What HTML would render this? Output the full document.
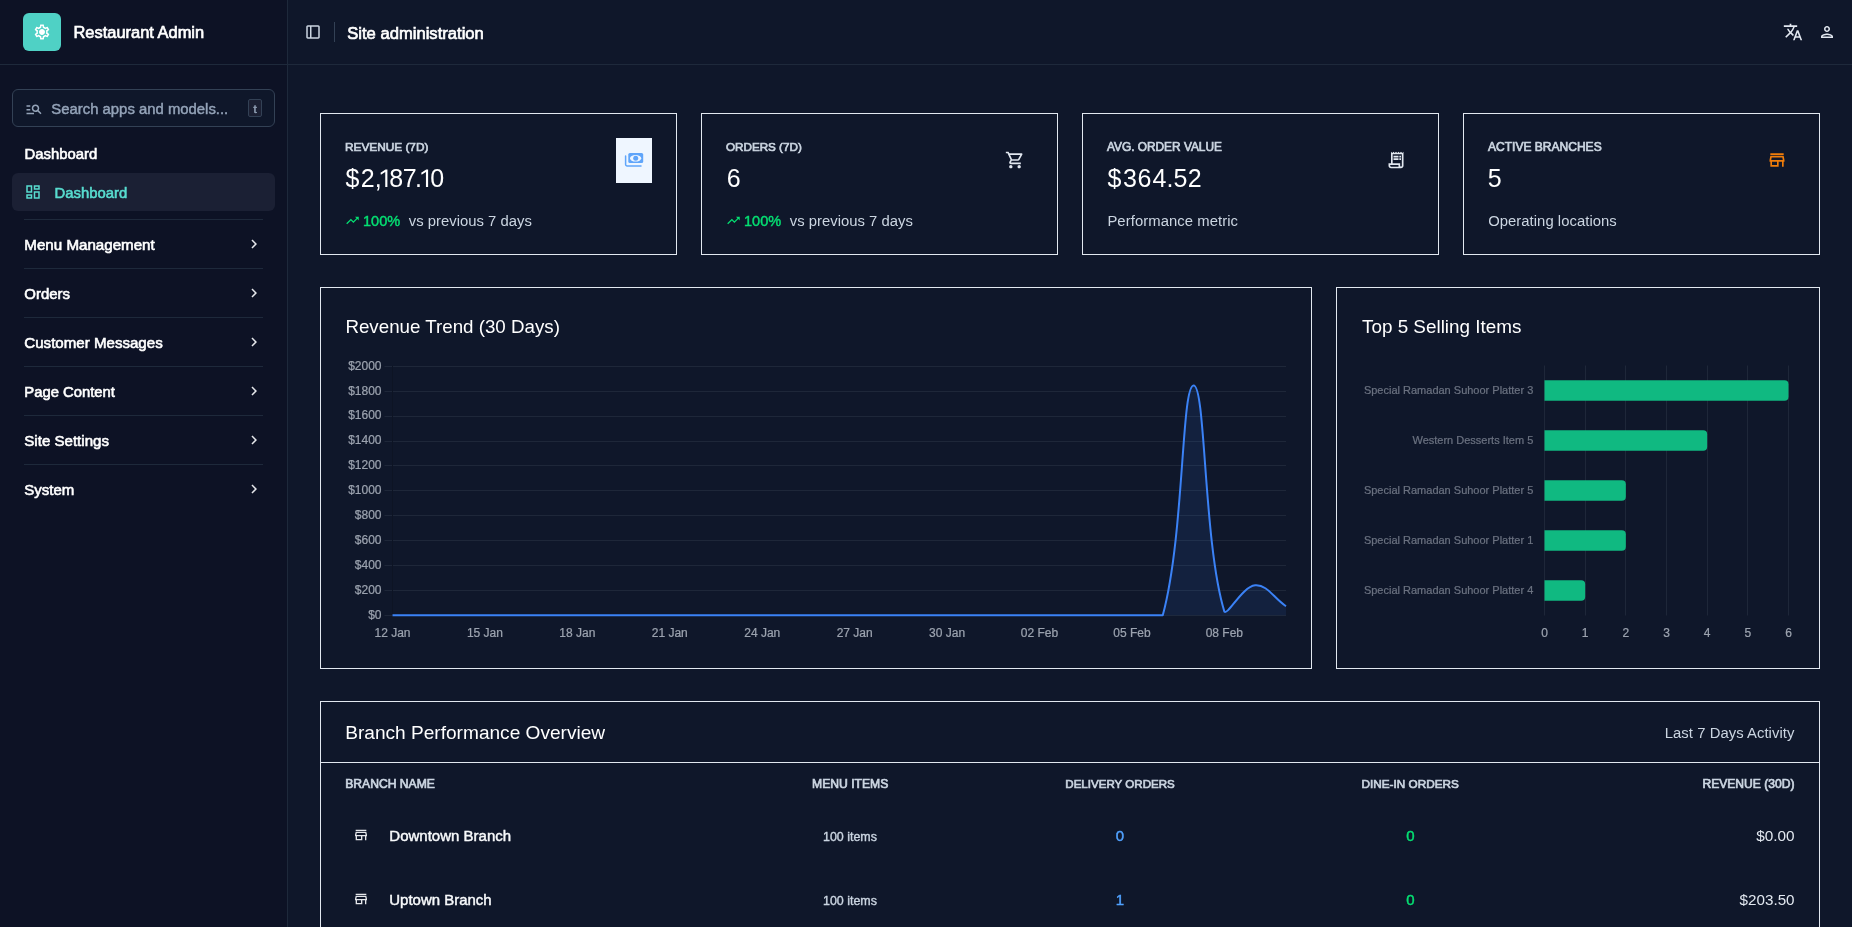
<!DOCTYPE html>
<html><head><meta charset="utf-8"><title>Site administration</title>
<style>
html,body{margin:0;padding:0;background:#0f172a;}
body{width:1852px;height:927px;position:relative;overflow:hidden;font-family:"Liberation Sans", sans-serif;}
svg{display:block}
svg text{font-family:"Liberation Sans", sans-serif;white-space:pre}
svg text.c{stroke-width:.22px}
</style></head><body>
<div style="position:absolute;left:0px;top:0px;width:287px;height:927px;background:#0d1225"></div>
<div style="position:absolute;left:287px;top:0px;width:1px;height:927px;background:#1e293b"></div>
<div style="position:absolute;left:0px;top:64px;width:1852px;height:1px;background:#1e293b"></div>
<div style="position:absolute;left:23px;top:13px;width:38px;height:38px;background:#4fd1c5;border-radius:6px"></div>
<svg style="position:absolute;left:33.00px;top:23.00px" width="18" height="18" viewBox="0 0 24 24"><path fill="#ffffff" d="M19.43 12.98c.04-.32.07-.64.07-.98 0-.34-.03-.66-.07-.98l2.11-1.65c.19-.15.24-.42.12-.64l-2-3.46c-.09-.16-.26-.25-.44-.25-.06 0-.12.01-.17.03l-2.49 1c-.52-.4-1.08-.73-1.69-.98l-.38-2.65C14.46 2.18 14.25 2 14 2h-4c-.25 0-.46.18-.49.42l-.38 2.65c-.61.25-1.17.59-1.69.98l-2.49-1c-.06-.02-.12-.03-.18-.03-.17 0-.34.09-.43.25l-2 3.46c-.13.22-.07.49.12.64l2.11 1.65c-.04.32-.07.65-.07.98 0 .33.03.66.07.98l-2.11 1.65c-.19.15-.24.42-.12.64l2 3.46c.09.16.26.25.44.25.06 0 .12-.01.17-.03l2.49-1c.52.4 1.08.73 1.69.98l.38 2.65c.03.24.24.42.49.42h4c.25 0 .46-.18.49-.42l.38-2.65c.61-.25 1.17-.59 1.69-.98l2.49 1c.06.02.12.03.18.03.17 0 .34-.09.43-.25l2-3.46c.12-.22.07-.49-.12-.64l-2.11-1.65zm-1.98-1.71c.04.31.05.52.05.73 0 .21-.02.43-.05.73l-.14 1.13.89.7 1.08.84-.7 1.21-1.27-.51-1.04-.42-.9.68c-.43.32-.84.56-1.25.73l-1.06.43-.16 1.13-.2 1.35h-1.4l-.19-1.35-.16-1.13-1.06-.43c-.43-.18-.83-.41-1.23-.71l-.91-.7-1.06.43-1.27.51-.7-1.21 1.08-.84.89-.7-.14-1.13c-.03-.31-.05-.54-.05-.74s.02-.43.05-.73l.14-1.13-.89-.7-1.08-.84.7-1.21 1.27.51 1.04.42.9-.68c.43-.32.84-.56 1.25-.73l1.06-.43.16-1.13.2-1.35h1.39l.19 1.35.16 1.13 1.06.43c.43.18.83.41 1.23.71l.91.7 1.06-.43 1.27-.51.7 1.21-1.07.85-.89.7.14 1.13zM12 8c-2.21 0-4 1.79-4 4s1.79 4 4 4 4-1.79 4-4-1.79-4-4-4z"/></svg>
<svg style="position:absolute;left:304.00px;top:23.00px" width="18" height="18" viewBox="0 0 24 24"><path fill="#cbd5e1" d="M5 21q-.825 0-1.412-.587T3 19V5q0-.825.588-1.412T5 3h14q.825 0 1.413.588T21 5v14q0 .825-.587 1.413T19 21zm3-2V5H5v14zm2 0h9V5h-9z"/></svg>
<div style="position:absolute;left:334px;top:22px;width:1px;height:20px;background:#334155"></div>
<svg style="position:absolute;left:1783.00px;top:22.00px" width="20" height="20" viewBox="0 0 24 24"><path fill="#e2e8f0" d="M12.87 15.07l-2.54-2.51.03-.03c1.74-1.94 2.98-4.17 3.71-6.53H17V4h-7V2H8v2H1v1.99h11.17C11.5 7.92 10.44 9.75 9 11.35 8.07 10.32 7.3 9.19 6.69 8h-2c.73 1.63 1.73 3.17 2.98 4.56l-5.09 5.02L4 19l5-5 3.11 3.11.76-2.04zM18.5 10h-2L12 22h2l1.12-3h4.75L21 22h2l-4.5-12zm-2.62 7l1.62-4.33L19.12 17h-3.24z"/></svg>
<svg style="position:absolute;left:1818.00px;top:23.00px" width="18" height="18" viewBox="0 0 24 24"><path fill="#e2e8f0" d="M12 6c1.1 0 2 .9 2 2s-.9 2-2 2-2-.9-2-2 .9-2 2-2m0 10c2.7 0 5.8 1.29 6 2H6c.23-.72 3.31-2 6-2m0-12C9.79 4 8 5.79 8 8s1.79 4 4 4 4-1.79 4-4-1.79-4-4-4zm0 10c-2.67 0-8 1.34-8 4v2h16v-2c0-2.66-5.33-4-8-4z"/></svg>
<div style="position:absolute;left:12px;top:89px;width:263px;height:38px;box-sizing:border-box;border:1px solid #334155;border-radius:6px;background:#0f172a"></div>
<svg style="position:absolute;left:24.50px;top:99.50px" width="18" height="18" viewBox="0 0 24 24"><path fill="#94a3b8" d="M7 9H2V7h5v2zm0 3H2v2h5v-2zm13.59 7l-3.83-3.83c-.8.52-1.74.83-2.76.83-2.76 0-5-2.24-5-5s2.24-5 5-5 5 2.24 5 5c0 1.02-.31 1.96-.83 2.75L22 17.6 20.59 19zM17 11c0-1.65-1.35-3-3-3s-3 1.35-3 3 1.35 3 3 3 3-1.35 3-3zM2 19h10v-2H2v2z"/></svg>
<div style="position:absolute;left:248px;top:99px;width:14px;height:18px;box-sizing:border-box;border:1px solid #334155;border-radius:2px;background:#1c2033"></div>
<div style="position:absolute;left:12px;top:173px;width:263px;height:38px;background:#1b2034;border-radius:6px"></div>
<svg style="position:absolute;left:24.00px;top:183.00px" width="18" height="18" viewBox="0 0 24 24"><path fill="#58dccf" d="M19 5v2h-4V5h4M9 5v6H5V5h4m10 8v6h-4v-6h4M9 17v2H5v-2h4M21 3h-8v6h8V3zM11 3H3v10h8V3zm10 8h-8v10h8V11zm-10 4H3v6h8v-6z"/></svg>
<div style="position:absolute;left:24px;top:219px;width:239px;height:1px;background:#1e293b"></div>
<svg style="position:absolute;left:245.00px;top:235.00px" width="18" height="18" viewBox="0 0 24 24"><path fill="#e5e7eb" d="M10 6L8.59 7.41 13.17 12l-4.58 4.59L10 18l6-6z"/></svg>
<div style="position:absolute;left:24px;top:268px;width:239px;height:1px;background:#1e293b"></div>
<svg style="position:absolute;left:245.00px;top:284.00px" width="18" height="18" viewBox="0 0 24 24"><path fill="#e5e7eb" d="M10 6L8.59 7.41 13.17 12l-4.58 4.59L10 18l6-6z"/></svg>
<div style="position:absolute;left:24px;top:317px;width:239px;height:1px;background:#1e293b"></div>
<svg style="position:absolute;left:245.00px;top:333.00px" width="18" height="18" viewBox="0 0 24 24"><path fill="#e5e7eb" d="M10 6L8.59 7.41 13.17 12l-4.58 4.59L10 18l6-6z"/></svg>
<div style="position:absolute;left:24px;top:366px;width:239px;height:1px;background:#1e293b"></div>
<svg style="position:absolute;left:245.00px;top:382.00px" width="18" height="18" viewBox="0 0 24 24"><path fill="#e5e7eb" d="M10 6L8.59 7.41 13.17 12l-4.58 4.59L10 18l6-6z"/></svg>
<div style="position:absolute;left:24px;top:415px;width:239px;height:1px;background:#1e293b"></div>
<svg style="position:absolute;left:245.00px;top:431.00px" width="18" height="18" viewBox="0 0 24 24"><path fill="#e5e7eb" d="M10 6L8.59 7.41 13.17 12l-4.58 4.59L10 18l6-6z"/></svg>
<div style="position:absolute;left:24px;top:464px;width:239px;height:1px;background:#1e293b"></div>
<svg style="position:absolute;left:245.00px;top:480.00px" width="18" height="18" viewBox="0 0 24 24"><path fill="#e5e7eb" d="M10 6L8.59 7.41 13.17 12l-4.58 4.59L10 18l6-6z"/></svg>
<div style="position:absolute;left:320px;top:113px;width:357px;height:142px;box-sizing:border-box;border:1px solid #e2e8f0;background:#0f172a"></div>
<div style="position:absolute;left:616px;top:138px;width:36px;height:45px;background:#eff6ff"></div>
<svg style="position:absolute;left:624px;top:150px" width="20" height="20" viewBox="0 0 20 20"><rect x="4.3" y="3" width="14.9" height="10.1" rx="1.6" fill="#60a5fa"/><ellipse cx="11.6" cy="8.3" rx="5.6" ry="3.3" fill="#eff6ff"/><circle cx="11.7" cy="8.3" r="2.5" fill="#60a5fa"/><path d="M1.6,6 V14.4 a1.5,1.5 0 0 0 1.5,1.5 H17" fill="none" stroke="#60a5fa" stroke-width="1.5" stroke-linecap="round"/></svg>
<div style="position:absolute;left:701px;top:113px;width:357px;height:142px;box-sizing:border-box;border:1px solid #e2e8f0;background:#0f172a"></div>
<svg style="position:absolute;left:1005.00px;top:150.00px" width="20" height="20" viewBox="0 0 24 24"><path fill="#e2e8f0" d="M15.55 13c.75 0 1.41-.41 1.75-1.03l3.58-6.49c.37-.66-.11-1.48-.87-1.48H5.21l-.94-2H1v2h2l3.6 7.59-1.35 2.44C4.52 15.37 5.48 17 7 17h12v-2H7l1.1-2h7.45zM6.16 6h12.15l-2.76 5H8.53L6.16 6zM7 18c-1.1 0-1.99.9-1.99 2S5.9 22 7 22s2-.9 2-2-.9-2-2-2zm10 0c-1.1 0-1.99.9-1.99 2s.89 2 1.99 2 2-.9 2-2-.9-2-2-2z"/></svg>
<div style="position:absolute;left:1082px;top:113px;width:357px;height:142px;box-sizing:border-box;border:1px solid #e2e8f0;background:#0f172a"></div>
<svg style="position:absolute;left:1386.00px;top:150.00px" width="20" height="20" viewBox="0 0 24 24"><path fill="#e2e8f0" d="M19.5 3.5L18 2l-1.5 1.5L15 2l-1.5 1.5L12 2l-1.5 1.5L9 2 7.5 3.5 6 2v14H3v3c0 1.66 1.34 3 3 3h12c1.66 0 3-1.34 3-3V2l-1.5 1.500zM15 20H6c-.55 0-1-.45-1-1v-1h10v2zm4-1c0 .55-.45 1-1 1s-1-.45-1-1v-3H8V5h11v14zM9 7h6v2H9zM16 7h2v2h-2zM9 10h6v2H9zM16 10h2v2h-2z"/></svg>
<div style="position:absolute;left:1463px;top:113px;width:357px;height:142px;box-sizing:border-box;border:1px solid #e2e8f0;background:#0f172a"></div>
<svg style="position:absolute;left:1767.00px;top:150.00px" width="20" height="20" viewBox="0 0 24 24"><path fill="#f07d0a" d="M18.36 9l.6 3H5.04l.6-3h12.72M20 4H4v2h16V4zm0 3H4l-1 5v2h1v6h10v-6h4v6h2v-6h1v-2l-1-5zM6 18v-4h6v4H6z"/></svg>
<svg style="position:absolute;left:344.50px;top:213.10px" width="15" height="15" viewBox="0 0 24 24"><path fill="#05df72" d="M16 6l2.29 2.29-4.88 4.88-4-4L2 16.59 3.41 18l6-6 4 4 6.3-6.29L22 12V6z"/></svg>
<svg style="position:absolute;left:725.50px;top:213.10px" width="15" height="15" viewBox="0 0 24 24"><path fill="#05df72" d="M16 6l2.29 2.29-4.88 4.88-4-4L2 16.59 3.41 18l6-6 4 4 6.3-6.29L22 12V6z"/></svg>
<div style="position:absolute;left:320px;top:287px;width:992px;height:382px;box-sizing:border-box;border:1px solid #e2e8f0;background:#0f172a"></div>
<div style="position:absolute;left:1336px;top:287px;width:484px;height:382px;box-sizing:border-box;border:1px solid #e2e8f0;background:#0f172a"></div>
<div style="position:absolute;left:320px;top:701px;width:1500px;height:300px;box-sizing:border-box;border:1px solid #e2e8f0;background:#0f172a"></div>
<div style="position:absolute;left:321px;top:762px;width:1498px;height:1px;background:#e2e8f0"></div>
<svg style="position:absolute;left:353.00px;top:827.00px" width="16" height="16" viewBox="0 0 24 24"><path fill="#e5e7eb" d="M18.36 9l.6 3H5.04l.6-3h12.72M20 4H4v2h16V4zm0 3H4l-1 5v2h1v6h10v-6h4v6h2v-6h1v-2l-1-5zM6 18v-4h6v4H6z"/></svg>
<svg style="position:absolute;left:353.00px;top:891.00px" width="16" height="16" viewBox="0 0 24 24"><path fill="#e5e7eb" d="M18.36 9l.6 3H5.04l.6-3h12.72M20 4H4v2h16V4zm0 3H4l-1 5v2h1v6h10v-6h4v6h2v-6h1v-2l-1-5zM6 18v-4h6v4H6z"/></svg>
<svg style="position:absolute;left:0;top:0;will-change:transform" width="1852" height="927" viewBox="0 0 1852 927">
<path fill="#ffffff" d="M387.40,169.38 V187 H385.25 V172.07 L380.90,174.68 L380.50,172.68 L385.50,169.38 Z"/>
<path fill="#ffffff" d="M428.10,169.38 V187 H425.95 V172.07 L421.60,174.68 L421.20,172.68 L426.20,169.38 Z"/>
<text x="345.47 360.80 374.63 389.35 402.69 414.88 430.25" y="187" font-size="25" fill="#ffffff">$2,87.0</text>
<text x="1107.62 1122.88 1137.46 1152.43 1166.53 1173.47 1187.75" y="187" font-size="25" fill="#ffffff">$364.52</text>
<line x1="384.5" y1="615.50" x2="1286.0" y2="615.50" stroke="#1e2739"/>
<text x="381.5" y="618.65" text-anchor="end" font-size="12" class="c" stroke="#9ca3af" fill="#9ca3af">$0</text>
<line x1="384.5" y1="590.50" x2="1286.0" y2="590.50" stroke="#1e2739"/>
<text x="381.5" y="593.75" text-anchor="end" font-size="12" class="c" stroke="#9ca3af" fill="#9ca3af">$200</text>
<line x1="384.5" y1="565.50" x2="1286.0" y2="565.50" stroke="#1e2739"/>
<text x="381.5" y="568.85" text-anchor="end" font-size="12" class="c" stroke="#9ca3af" fill="#9ca3af">$400</text>
<line x1="384.5" y1="540.50" x2="1286.0" y2="540.50" stroke="#1e2739"/>
<text x="381.5" y="543.95" text-anchor="end" font-size="12" class="c" stroke="#9ca3af" fill="#9ca3af">$600</text>
<line x1="384.5" y1="515.50" x2="1286.0" y2="515.50" stroke="#1e2739"/>
<text x="381.5" y="519.05" text-anchor="end" font-size="12" class="c" stroke="#9ca3af" fill="#9ca3af">$800</text>
<line x1="384.5" y1="490.50" x2="1286.0" y2="490.50" stroke="#1e2739"/>
<text x="381.5" y="494.15" text-anchor="end" font-size="12" class="c" stroke="#9ca3af" fill="#9ca3af">$1000</text>
<line x1="384.5" y1="465.50" x2="1286.0" y2="465.50" stroke="#1e2739"/>
<text x="381.5" y="469.25" text-anchor="end" font-size="12" class="c" stroke="#9ca3af" fill="#9ca3af">$1200</text>
<line x1="384.5" y1="441.50" x2="1286.0" y2="441.50" stroke="#1e2739"/>
<text x="381.5" y="444.35" text-anchor="end" font-size="12" class="c" stroke="#9ca3af" fill="#9ca3af">$1400</text>
<line x1="384.5" y1="416.50" x2="1286.0" y2="416.50" stroke="#1e2739"/>
<text x="381.5" y="419.45" text-anchor="end" font-size="12" class="c" stroke="#9ca3af" fill="#9ca3af">$1600</text>
<line x1="384.5" y1="391.50" x2="1286.0" y2="391.50" stroke="#1e2739"/>
<text x="381.5" y="394.55" text-anchor="end" font-size="12" class="c" stroke="#9ca3af" fill="#9ca3af">$1800</text>
<line x1="384.5" y1="366.50" x2="1286.0" y2="366.50" stroke="#1e2739"/>
<text x="381.5" y="369.65" text-anchor="end" font-size="12" class="c" stroke="#9ca3af" fill="#9ca3af">$2000</text>
<line x1="392.5" y1="365.85" x2="392.5" y2="615.85" stroke="#0d1424"/>
<text x="392.50" y="637" text-anchor="middle" font-size="12" class="c" stroke="#9ca3af" fill="#9ca3af">12 Jan</text>
<text x="484.93" y="637" text-anchor="middle" font-size="12" class="c" stroke="#9ca3af" fill="#9ca3af">15 Jan</text>
<text x="577.36" y="637" text-anchor="middle" font-size="12" class="c" stroke="#9ca3af" fill="#9ca3af">18 Jan</text>
<text x="669.79" y="637" text-anchor="middle" font-size="12" class="c" stroke="#9ca3af" fill="#9ca3af">21 Jan</text>
<text x="762.22" y="637" text-anchor="middle" font-size="12" class="c" stroke="#9ca3af" fill="#9ca3af">24 Jan</text>
<text x="854.66" y="637" text-anchor="middle" font-size="12" class="c" stroke="#9ca3af" fill="#9ca3af">27 Jan</text>
<text x="947.09" y="637" text-anchor="middle" font-size="12" class="c" stroke="#9ca3af" fill="#9ca3af">30 Jan</text>
<text x="1039.52" y="637" text-anchor="middle" font-size="12" class="c" stroke="#9ca3af" fill="#9ca3af">02 Feb</text>
<text x="1131.95" y="637" text-anchor="middle" font-size="12" class="c" stroke="#9ca3af" fill="#9ca3af">05 Feb</text>
<text x="1224.38" y="637" text-anchor="middle" font-size="12" class="c" stroke="#9ca3af" fill="#9ca3af">08 Feb</text>
<path d="M392.50,615.35 H423.31 H454.12 H484.93 H515.74 H546.55 H577.36 H608.17 H638.98 H669.79 H700.60 H731.41 H762.22 H793.03 H823.84 H854.66 H885.47 H916.28 H947.09 H977.90 H1008.71 H1039.52 H1070.33 H1101.14 H1131.95 H1162.76 C1184.52,534.20 1181.15,386.28 1193.57,385.52 C1205.79,384.78 1203.45,543.73 1224.38,611.62 C1228.09,615.35 1242.35,586.46 1255.19,585.35 C1267.00,584.32 1273.68,597.90 1286.00,606.26 L1286.00,615.35 L392.50,615.35 Z" fill="rgba(59,130,246,0.1)"/>
<path d="M392.50,615.35 H423.31 H454.12 H484.93 H515.74 H546.55 H577.36 H608.17 H638.98 H669.79 H700.60 H731.41 H762.22 H793.03 H823.84 H854.66 H885.47 H916.28 H947.09 H977.90 H1008.71 H1039.52 H1070.33 H1101.14 H1131.95 H1162.76 C1184.52,534.20 1181.15,386.28 1193.57,385.52 C1205.79,384.78 1203.45,543.73 1224.38,611.62 C1228.09,615.35 1242.35,586.46 1255.19,585.35 C1267.00,584.32 1273.68,597.90 1286.00,606.26" fill="none" stroke="#3b82f6" stroke-width="2" stroke-linejoin="round"/>
<line x1="1544.50" y1="365.5" x2="1544.50" y2="615.5" stroke="#1e2739"/>
<text x="1544.50" y="637" text-anchor="middle" font-size="12" class="c" stroke="#9ca3af" fill="#9ca3af">0</text>
<line x1="1585.50" y1="365.5" x2="1585.50" y2="615.5" stroke="#1e2739"/>
<text x="1585.17" y="637" text-anchor="middle" font-size="12" class="c" stroke="#9ca3af" fill="#9ca3af">1</text>
<line x1="1625.50" y1="365.5" x2="1625.50" y2="615.5" stroke="#1e2739"/>
<text x="1625.83" y="637" text-anchor="middle" font-size="12" class="c" stroke="#9ca3af" fill="#9ca3af">2</text>
<line x1="1666.50" y1="365.5" x2="1666.50" y2="615.5" stroke="#1e2739"/>
<text x="1666.50" y="637" text-anchor="middle" font-size="12" class="c" stroke="#9ca3af" fill="#9ca3af">3</text>
<line x1="1707.50" y1="365.5" x2="1707.50" y2="615.5" stroke="#1e2739"/>
<text x="1707.17" y="637" text-anchor="middle" font-size="12" class="c" stroke="#9ca3af" fill="#9ca3af">4</text>
<line x1="1747.50" y1="365.5" x2="1747.50" y2="615.5" stroke="#1e2739"/>
<text x="1747.83" y="637" text-anchor="middle" font-size="12" class="c" stroke="#9ca3af" fill="#9ca3af">5</text>
<line x1="1788.50" y1="365.5" x2="1788.50" y2="615.5" stroke="#1e2739"/>
<text x="1788.50" y="637" text-anchor="middle" font-size="12" class="c" stroke="#9ca3af" fill="#9ca3af">6</text>
<path d="M1544.50,380.30 H1784.50 a4,4 0 0 1 4,4 V396.70 a4,4 0 0 1 -4,4 H1544.50 Z" fill="#10b981"/>
<text x="1533.3" y="394.00" text-anchor="end" font-size="11" class="c" stroke="#6b7280" fill="#6b7280">Special Ramadan Suhoor Platter 3</text>
<path d="M1544.50,430.30 H1703.17 a4,4 0 0 1 4,4 V446.70 a4,4 0 0 1 -4,4 H1544.50 Z" fill="#10b981"/>
<text x="1533.3" y="444.00" text-anchor="end" font-size="11" class="c" stroke="#6b7280" fill="#6b7280">Western Desserts Item 5</text>
<path d="M1544.50,480.30 H1621.83 a4,4 0 0 1 4,4 V496.70 a4,4 0 0 1 -4,4 H1544.50 Z" fill="#10b981"/>
<text x="1533.3" y="494.00" text-anchor="end" font-size="11" class="c" stroke="#6b7280" fill="#6b7280">Special Ramadan Suhoor Platter 5</text>
<path d="M1544.50,530.30 H1621.83 a4,4 0 0 1 4,4 V546.70 a4,4 0 0 1 -4,4 H1544.50 Z" fill="#10b981"/>
<text x="1533.3" y="544.00" text-anchor="end" font-size="11" class="c" stroke="#6b7280" fill="#6b7280">Special Ramadan Suhoor Platter 1</text>
<path d="M1544.50,580.30 H1581.17 a4,4 0 0 1 4,4 V596.70 a4,4 0 0 1 -4,4 H1544.50 Z" fill="#10b981"/>
<text x="1533.3" y="594.00" text-anchor="end" font-size="11" class="c" stroke="#6b7280" fill="#6b7280">Special Ramadan Suhoor Platter 4</text>
<text x="73.50" y="38" font-size="16.44" fill="#ffffff" stroke="#ffffff" stroke-width="0.66">Restaurant Admin</text>
<text x="347.20" y="39" font-size="16.61" fill="#ffffff" stroke="#ffffff" stroke-width="0.66">Site administration</text>
<text x="51.30" y="114" font-size="14.88" fill="#94a3b8" stroke="#94a3b8" stroke-width="0.45">Search apps and models...</text>
<text x="253.60" y="113" font-size="11.50" fill="#94a3b8" stroke="#94a3b8" stroke-width="0.46">t</text>
<text x="24.50" y="159" font-size="14.86" fill="#ffffff" stroke="#ffffff" stroke-width="0.59">Dashboard</text>
<text x="54.50" y="198" font-size="14.86" fill="#58dccf" stroke="#58dccf" stroke-width="0.59">Dashboard</text>
<text x="24.30" y="250" font-size="15.15" fill="#ffffff" stroke="#ffffff" stroke-width="0.61">Menu Management</text>
<text x="24.30" y="299" font-size="14.95" fill="#ffffff" stroke="#ffffff" stroke-width="0.60">Orders</text>
<text x="24.30" y="348" font-size="15.10" fill="#ffffff" stroke="#ffffff" stroke-width="0.60">Customer Messages</text>
<text x="24.30" y="397" font-size="14.83" fill="#ffffff" stroke="#ffffff" stroke-width="0.59">Page Content</text>
<text x="24.30" y="446" font-size="15.09" fill="#ffffff" stroke="#ffffff" stroke-width="0.60">Site Settings</text>
<text x="24.30" y="495" font-size="15.00" fill="#ffffff" stroke="#ffffff" stroke-width="0.60">System</text>
<text x="345.00" y="151" font-size="11.82" fill="#cbd5e1" stroke="#cbd5e1" stroke-width="0.69">REVENUE (7D)</text>
<text x="726.00" y="151" font-size="11.67" fill="#cbd5e1" stroke="#cbd5e1" stroke-width="0.68">ORDERS (7D)</text>
<text x="726.70" y="187" font-size="25.00" fill="#ffffff">6</text>
<text x="1107.00" y="151" font-size="11.86" fill="#cbd5e1" stroke="#cbd5e1" stroke-width="0.69">AVG. ORDER VALUE</text>
<text x="1488.00" y="151" font-size="12.04" fill="#cbd5e1" stroke="#cbd5e1" stroke-width="0.70">ACTIVE BRANCHES</text>
<text x="1487.85" y="187" font-size="25.00" fill="#ffffff">5</text>
<text x="363.00" y="226" font-size="14.54" fill="#05df72" stroke="#05df72" stroke-width="0.44">100%</text>
<text x="408.80" y="226" font-size="14.84" fill="#cbd5e1" letter-spacing="0.016">vs previous 7 days</text>
<text x="744.00" y="226" font-size="14.54" fill="#05df72" stroke="#05df72" stroke-width="0.44">100%</text>
<text x="789.80" y="226" font-size="14.84" fill="#cbd5e1" letter-spacing="0.016">vs previous 7 days</text>
<text x="1107.40" y="226" font-size="14.84" fill="#cbd5e1" letter-spacing="0.073">Performance metric</text>
<text x="1488.20" y="226" font-size="14.84" fill="#cbd5e1" letter-spacing="0.043">Operating locations</text>
<text x="345.40" y="333" font-size="18.74" fill="#ffffff">Revenue Trend (30 Days)</text>
<text x="1362.00" y="333" font-size="18.88" fill="#ffffff">Top 5 Selling Items</text>
<text x="345.20" y="739" font-size="19.08" fill="#ffffff" letter-spacing="0.007">Branch Performance Overview</text>
<text x="1664.70" y="738" font-size="14.84" fill="#cbd5e1" letter-spacing="0.061">Last 7 Days Activity</text>
<text x="345.20" y="788" font-size="12.15" fill="#cbd5e1" stroke="#cbd5e1" stroke-width="0.70">BRANCH NAME</text>
<text x="812.00" y="788" font-size="12.17" fill="#cbd5e1" stroke="#cbd5e1" stroke-width="0.71">MENU ITEMS</text>
<text x="1065.30" y="788" font-size="11.57" fill="#cbd5e1" stroke="#cbd5e1" stroke-width="0.67">DELIVERY ORDERS</text>
<text x="1361.50" y="788" font-size="11.78" fill="#cbd5e1" stroke="#cbd5e1" stroke-width="0.68">DINE-IN ORDERS</text>
<text x="1702.40" y="788" font-size="12.11" fill="#cbd5e1" stroke="#cbd5e1" stroke-width="0.70">REVENUE (30D)</text>
<text x="389.30" y="841" font-size="15.02" fill="#f8fafc" stroke="#f8fafc" stroke-width="0.45">Downtown Branch</text>
<text x="823.00" y="841" font-size="12.45" fill="#cbd5e1" stroke="#cbd5e1" stroke-width="0.37">100 items</text>
<text x="1115.83" y="841" font-size="15.00" fill="#51a2ff" stroke="#51a2ff" stroke-width="0.45">0</text>
<text x="1406.13" y="841" font-size="15.00" fill="#05df72" stroke="#05df72" stroke-width="0.45">0</text>
<text x="1756.20" y="841" font-size="15.34" fill="#e2e8f0">$0.00</text>
<text x="389.30" y="905" font-size="14.98" fill="#f8fafc" stroke="#f8fafc" stroke-width="0.45">Uptown Branch</text>
<text x="823.00" y="905" font-size="12.45" fill="#cbd5e1" stroke="#cbd5e1" stroke-width="0.37">100 items</text>
<text x="1115.83" y="905" font-size="15.00" fill="#51a2ff" stroke="#51a2ff" stroke-width="0.45">1</text>
<text x="1406.13" y="905" font-size="15.00" fill="#05df72" stroke="#05df72" stroke-width="0.45">0</text>
<text x="1739.60" y="905" font-size="15.21" fill="#e2e8f0">$203.50</text>
</svg>
</body></html>
